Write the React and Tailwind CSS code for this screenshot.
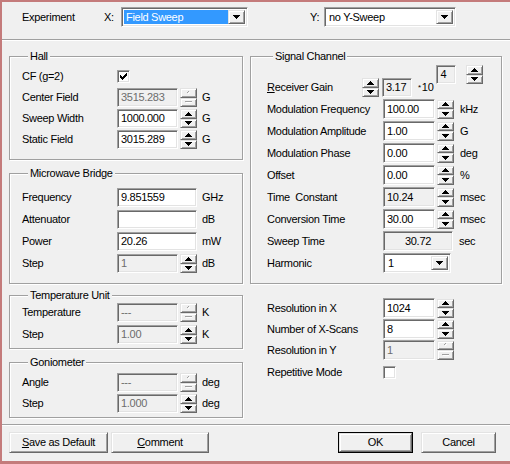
import React from "react";

const SUNKEN =
  "border border-t-[#a0a0a0] border-l-[#a0a0a0] border-r-white border-b-white shadow-[inset_1px_1px_0_#696969,inset_-1px_-1px_0_#e3e3e3]";
const RAISED =
  "bg-[#f0f0f0] border border-t-[#e3e3e3] border-l-[#e3e3e3] border-r-[#696969] border-b-[#696969] shadow-[inset_1px_1px_0_#fff,inset_-1px_-1px_0_#a0a0a0]";

function UpArrow() {
  return (
    <svg width="7" height="4" shapeRendering="crispEdges">
      <path d="M3 0h1v1h-1z M2 1h3v1h-3z M1 2h5v1h-5z M0 3h7v1h-7z" fill="#000" />
    </svg>
  );
}
function DownArrow() {
  return (
    <svg width="7" height="4" shapeRendering="crispEdges">
      <path d="M0 0h7v1h-7z M1 1h5v1h-5z M2 2h3v1h-3z M3 3h1v1h-1z" fill="#000" />
    </svg>
  );
}
function UpDisabled() {
  return (
    <svg width="7" height="4" shapeRendering="crispEdges">
      <path d="M4 1h1v1h-1z M3 2h1v1h-1z" fill="#fff" />
      <path d="M3 0h1v1h-1z M2 1h1v1h-1z" fill="#a0a0a0" />
    </svg>
  );
}
function DownDisabled() {
  return (
    <svg width="7" height="4" shapeRendering="crispEdges">
      <path d="M0 1h7v1h-7z" fill="#a0a0a0" />
      <path d="M1 2h7v1h-7z" fill="#fff" />
    </svg>
  );
}

function SpinBtn({ up, disabled }) {
  return (
    <div className={`flex-1 flex items-center justify-center ${RAISED}`}>
      {up ? (disabled ? <UpDisabled /> : <UpArrow />) : disabled ? <DownDisabled /> : <DownArrow />}
    </div>
  );
}

function Spin({ disabled, className = "" }) {
  return (
    <div className={`w-[17px] h-[19px] flex flex-col ${className}`}>
      <SpinBtn up disabled={disabled} />
      <SpinBtn disabled={disabled} />
    </div>
  );
}

function Box({ w, children, gray, dis, center, className = "" }) {
  return (
    <div
      className={`${w} h-full flex items-center ${center ? "justify-center" : "pl-[3px]"} ${
        gray || dis ? "bg-[#f0f0f0]" : "bg-white"
      } ${dis ? "text-[#6d6d6d]" : "text-black"} ${SUNKEN} ${className}`}
    >
      {children}
    </div>
  );
}

function Check({ checked }) {
  return (
    <div className={`w-[13px] h-[13px] bg-white flex items-center justify-center ${SUNKEN}`}>
      {checked && (
        <svg width="7" height="7" shapeRendering="crispEdges">
          <path
            d="M6 0h1v1h-1z M5 1h2v1h-2z M0 2h1v1h-1z M4 2h3v1h-3z M0 3h2v1h-2z M3 3h3v1h-3z M0 4h5v1h-5z M1 5h3v1h-3z M2 6h1v1h-1z"
            fill="#000"
          />
        </svg>
      )}
    </div>
  );
}

function Select({ w, value, highlight }) {
  return (
    <div className={`${w} h-[20px] flex bg-white p-[2px] ${SUNKEN}`}>
      <div
        className={`flex-1 flex items-center pl-[2px] ${
          highlight ? "bg-[#3399ff] text-white" : "text-black"
        }`}
      >
        {value}
      </div>
      <div className={`w-[17px] h-full flex items-center justify-center ${RAISED}`}>
        <DownArrow />
      </div>
    </div>
  );
}

function Row({ label, lw, h = "h-[19px]", children }) {
  return (
    <div className={`flex items-center ${h}`}>
      <span className={`${lw} shrink-0 whitespace-pre`}>{label}</span>
      {children}
    </div>
  );
}

function Group({ title, className = "", children }) {
  return (
    <fieldset
      className={`border border-[#a0a0a0] shadow-[1px_1px_0_#fff,inset_1px_1px_0_#fff] min-w-0 m-0 ${className}`}
    >
      <legend className="ml-[6px] px-[2px] bg-[#f0f0f0] leading-[13px]">{title}</legend>
      {children}
    </fieldset>
  );
}

function Sep() {
  return <div className="h-[2px] border-t border-b border-t-[#a0a0a0] border-b-white shrink-0" />;
}

function Button({ children, w, def }) {
  return (
    <div className={`${w} h-[21px] ${def ? "border border-black" : ""}`}>
      <div className={`w-full h-full flex items-center justify-center ${RAISED}`}>{children}</div>
    </div>
  );
}

const Unit = ({ children, ml = "ml-[5px]" }) => <span className={ml}>{children}</span>;

export default function App() {
  const LW = "w-[95px]";
  const RW = "w-[116px]";
  return (
    <div className="w-[510px] h-[464px] bg-[#f0f0f0] border-l-2 border-t-2 border-b-[3px] border-[#c47b7b] flex flex-col text-black text-[11px] leading-[13px] tracking-[-0.3px] font-['Liberation_Sans',Arial,sans-serif] overflow-hidden">
      {/* top bar */}
      <div className="h-[37px] shrink-0 pt-[5px] pl-[20px]">
        <div className="h-[20px] flex items-center">
          <span className="w-[82px]">Experiment</span>
          <span className="w-[17px]">X:</span>
          <Select w="w-[127px]" value="Field Sweep" highlight />
          <span className="ml-[62px] w-[14px]">Y:</span>
          <Select w="w-[132px]" value="no Y-Sweep" />
        </div>
      </div>
      <Sep />

      {/* main */}
      <div className="flex-1 flex pl-[7px] pt-[9px] gap-[7px]">
        {/* left column */}
        <div className="w-[234px] flex flex-col">
          <Group title="Hall" className="pt-[4px] pb-[10px] pl-[12px]">
            <div className="flex flex-col gap-[2px]">
              <Row label="CF (g=2)" lw={LW}>
                <Check checked />
              </Row>
              <Row label="Center Field" lw={LW}>
                <Box w="w-[61px]" dis>3515.283</Box>
                <Spin disabled className="ml-[2px]" />
                <Unit>G</Unit>
              </Row>
              <Row label="Sweep Width" lw={LW}>
                <Box w="w-[61px]">1000.000</Box>
                <Spin className="ml-[2px]" />
                <Unit>G</Unit>
              </Row>
              <Row label="Static Field" lw={LW}>
                <Box w="w-[61px]">3015.289</Box>
                <Spin className="ml-[2px]" />
                <Unit>G</Unit>
              </Row>
            </div>
          </Group>

          <Group title="Microwave Bridge" className="mt-[7px] pt-[8px] pb-[10px] pl-[12px]">
            <div className="flex flex-col gap-[3px]">
              <Row label="Frequency" lw={LW}>
                <Box w="w-[80px]">9.851559</Box>
                <Unit>GHz</Unit>
              </Row>
              <Row label="Attenuator" lw={LW}>
                <Box w="w-[80px]"></Box>
                <Unit>dB</Unit>
              </Row>
              <Row label="Power" lw={LW}>
                <Box w="w-[80px]">20.26</Box>
                <Unit>mW</Unit>
              </Row>
              <Row label="Step" lw={LW}>
                <Box w="w-[61px]" dis>1</Box>
                <Spin className="ml-[2px]" />
                <Unit>dB</Unit>
              </Row>
            </div>
          </Group>

          <Group title="Temperature Unit" className="mt-[5px] pt-[1px] pb-[4px] pl-[12px]">
            <div className="flex flex-col gap-[3px]">
              <Row label="Temperature" lw={LW}>
                <Box w="w-[61px]" dis>---</Box>
                <Spin disabled className="ml-[2px]" />
                <Unit>K</Unit>
              </Row>
              <Row label="Step" lw={LW}>
                <Box w="w-[61px]" dis>1.00</Box>
                <Spin className="ml-[2px]" />
                <Unit>K</Unit>
              </Row>
            </div>
          </Group>

          <Group title="Goniometer" className="mt-[7px] pt-[4px] pb-[4px] pl-[12px]">
            <div className="flex flex-col gap-[2px]">
              <Row label="Angle" lw={LW}>
                <Box w="w-[61px]" dis>---</Box>
                <Spin disabled className="ml-[2px]" />
                <Unit>deg</Unit>
              </Row>
              <Row label="Step" lw={LW}>
                <Box w="w-[61px]" dis>1.000</Box>
                <Spin className="ml-[2px]" />
                <Unit>deg</Unit>
              </Row>
            </div>
          </Group>
        </div>

        {/* right column */}
        <div className="w-[252px] flex flex-col">
          <Group title="Signal Channel" className="pt-0 pb-[10px] pl-[16px]">
            <div className="flex flex-col gap-[2px]">
              <div className="h-[34px] flex items-end">
                <div className="h-[19px] flex items-center w-[95px] shrink-0">
                  <span>
                    <span className="underline">R</span>eceiver Gain
                  </span>
                </div>
                <Spin />
                <div className="h-[19px] ml-[3px]">
                  <Box w="w-[30px]" gray>3.17</Box>
                </div>
                <div className="h-[19px] flex items-center ml-[6px]">
                  <span className="text-[8px] self-start mt-[3px] mr-[1px]">*</span>
                  <span>10</span>
                </div>
                <div className="self-start mt-[2px] h-[19px] ml-[3px]">
                  <Box w="w-[20px]" gray>4</Box>
                </div>
                <Spin className="self-start mt-[2px] ml-[10px]" />
              </div>
              <Row label="Modulation Frequency" lw="w-[95px]" h="h-[20px]">
                <Box w="w-[52px]" className="ml-[21px]">100.00</Box>
                <Spin className="ml-[2px]" />
                <Unit ml="ml-[6px]">kHz</Unit>
              </Row>
              <Row label="Modulation Amplitude" lw={RW} h="h-[20px]">
                <Box w="w-[52px]">1.00</Box>
                <Spin className="ml-[2px]" />
                <Unit ml="ml-[6px]">G</Unit>
              </Row>
              <Row label="Modulation Phase" lw={RW} h="h-[20px]">
                <Box w="w-[52px]">0.00</Box>
                <Spin className="ml-[2px]" />
                <Unit ml="ml-[6px]">deg</Unit>
              </Row>
              <Row label="Offset" lw={RW} h="h-[20px]">
                <Box w="w-[52px]">0.00</Box>
                <Spin className="ml-[2px]" />
                <Unit ml="ml-[6px]">%</Unit>
              </Row>
              <Row label="Time  Constant" lw={RW} h="h-[20px]">
                <Box w="w-[52px]" gray>10.24</Box>
                <Spin className="ml-[2px]" />
                <Unit ml="ml-[6px]">msec</Unit>
              </Row>
              <Row label="Conversion Time" lw={RW} h="h-[20px]">
                <Box w="w-[52px]">30.00</Box>
                <Spin className="ml-[2px]" />
                <Unit ml="ml-[6px]">msec</Unit>
              </Row>
              <Row label="Sweep Time" lw={RW} h="h-[20px]">
                <Box w="w-[70px]" gray center>30.72</Box>
                <Unit ml="ml-[6px]">sec</Unit>
              </Row>
              <Row label="Harmonic" lw={RW} h="h-[20px]">
                <Select w="w-[68px]" value="1" />
              </Row>
            </div>
          </Group>

          <div className="mt-[14px] pl-[17px] flex flex-col gap-[1px]">
            <Row label="Resolution in X" lw={RW} h="h-[20px]">
              <Box w="w-[52px]">1024</Box>
              <Spin className="ml-[2px]" />
            </Row>
            <Row label="Number of X-Scans" lw={RW} h="h-[20px]">
              <Box w="w-[52px]">8</Box>
              <Spin className="ml-[2px]" />
            </Row>
            <Row label="Resolution in Y" lw={RW} h="h-[20px]">
              <Box w="w-[52px]" dis>1</Box>
              <Spin disabled className="ml-[2px]" />
            </Row>
            <Row label="Repetitive Mode" lw={RW} h="h-[22px]">
              <Check />
            </Row>
          </div>
        </div>
      </div>

      <Sep />
      {/* buttons */}
      <div className="h-[35px] shrink-0 pt-[6px] pl-[7px] pr-[14px] flex items-start justify-between">
        <div className="flex gap-[3px]">
          <Button w="w-[99px]">
            <span>
              <span className="underline">S</span>ave as Default
            </span>
          </Button>
          <Button w="w-[98px]">
            <span>
              <span className="underline">C</span>omment
            </span>
          </Button>
        </div>
        <div className="flex gap-[8px]">
          <Button w="w-[75px]" def>
            OK
          </Button>
          <Button w="w-[75px]">Cancel</Button>
        </div>
      </div>
    </div>
  );
}
